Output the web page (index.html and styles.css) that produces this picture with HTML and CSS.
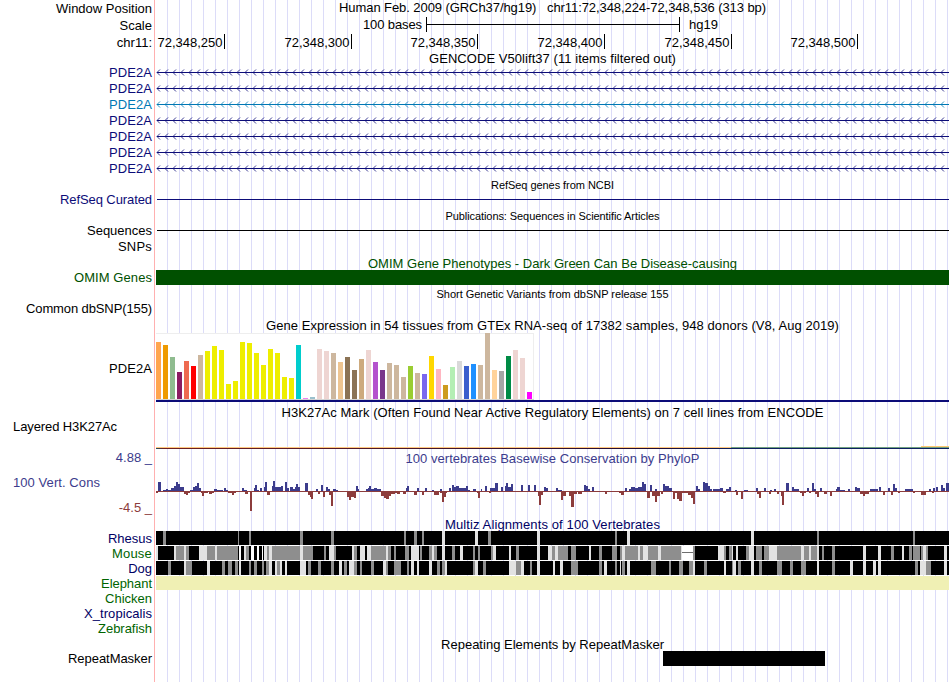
FILE: index.html
```
<!DOCTYPE html>
<html lang="en">
<head>
    <meta charset="UTF-8">
    <title>Genome Browser - chr11:72,348,224-72,348,536</title>
    <link rel="stylesheet" href="styles.css">
</head>
<body>
    <div class="browser">
        <!-- Position and ruler -->
        <div class="row">
            <div class="label"><span data-w="96">Window Position</span></div>
            <div class="caption top"><span data-w="427">Human Feb. 2009 (GRCh37/hg19)   chr11:72,348,224-72,348,536 (313 bp)</span></div>
        </div>
        <div class="row ruler-row">
            <div class="label">Scale</div>
            <div class="scale"><span data-w="59">100 bases</span><div class="scale-bar"></div><span>hg19</span></div>
        </div>
        <div class="row ruler-row">
            <div class="label">chr11:</div>
            <div class="ruler">
                <span>72,348,250</span><span>72,348,300</span><span>72,348,350</span><span>72,348,400</span><span>72,348,450</span><span>72,348,500</span>
            </div>
        </div>

        <!-- Genes -->
        <div class="row gencode-title"><div></div><div class="caption"><span data-w="247">GENCODE V50lift37 (11 items filtered out)</span></div></div>
        <div class="row gene"><div class="label"><span data-w="43">PDE2A</span></div><svg class="arrows"></svg></div>
        <div class="row gene"><div class="label"><span data-w="43">PDE2A</span></div><svg class="arrows"></svg></div>
        <div class="row gene light"><div class="label"><span data-w="43">PDE2A</span></div><svg class="arrows"></svg></div>
        <div class="row gene"><div class="label"><span data-w="43">PDE2A</span></div><svg class="arrows"></svg></div>
        <div class="row gene"><div class="label"><span data-w="43">PDE2A</span></div><svg class="arrows"></svg></div>
        <div class="row gene"><div class="label"><span data-w="43">PDE2A</span></div><svg class="arrows"></svg></div>
        <div class="row gene"><div class="label"><span data-w="43">PDE2A</span></div><svg class="arrows"></svg></div>

        <div class="row small"><div></div><div class="caption"><span data-w="123">RefSeq genes from NCBI</span></div></div>
        <div class="row navy"><div class="label"><span data-w="92">RefSeq Curated</span></div><div class="line"></div></div>
        <div class="row small"><div></div><div class="caption"><span data-w="214">Publications: Sequences in Scientific Articles</span></div></div>
        <div class="row"><div class="label"><span data-w="65">Sequences</span></div><div class="line"></div></div>
        <div class="row"><div class="label"><span data-w="34">SNPs</span></div></div>

        <div class="row omim-title"><div></div><div class="caption"><span data-w="369">OMIM Gene Phenotypes - Dark Green Can Be Disease-causing</span></div></div>
        <div class="row omim"><div class="label"><span data-w="78">OMIM Genes</span></div><div class="block"></div></div>
        <div class="row small"><div></div><div class="caption"><span data-w="232">Short Genetic Variants from dbSNP release 155</span></div></div>
        <div class="row"><div class="label"><span data-w="126">Common dbSNP(155)</span></div></div>

        <!-- GTEx -->
        <div class="row gtex-title"><div></div><div class="caption"><span data-w="573">Gene Expression in 54 tissues from GTEx RNA-seq of 17382 samples, 948 donors (V8, Aug 2019)</span></div></div>
        <div class="row gtex">
            <div class="label"><span data-w="43">PDE2A</span></div>
            <div class="gtex-lane"><div class="gtex-chart" id="gtex"></div></div>
        </div>

        <!-- Regulation -->
        <div class="row h3k-title"><div></div><div class="caption"><span data-w="542">H3K27Ac Mark (Often Found Near Active Regulatory Elements) on 7 cell lines from ENCODE</span></div></div>
        <div class="row h3k">
            <div class="label left"><span data-w="104">Layered H3K27Ac</span></div>
            <div class="h3k-signal"><i></i></div>
        </div>

        <!-- Conservation -->
        <div class="row cons">
            <div class="cons-labels">
                <div class="label">4.88 _</div>
                <div class="label left"><span data-w="87">100 Vert. Cons</span></div>
                <div class="label low">-4.5 _</div>
            </div>
            <div>
                <div class="caption"><span data-w="294">100 vertebrates Basewise Conservation by PhyloP</span></div>
                <svg id="phylop" width="793" height="48"></svg>
            </div>
        </div>

        <div class="row multiz-title"><div></div><div class="caption"><span data-w="215">Multiz Alignments of 100 Vertebrates</span></div></div>
        <div class="row species"><div class="label"><span data-w="44">Rhesus</span></div><svg class="align" id="rhesus"></svg></div>
        <div class="row species green"><div class="label"><span data-w="40">Mouse</span></div><svg class="align" id="mouse"></svg></div>
        <div class="row species"><div class="label">Dog</div><svg class="align" id="dog"></svg></div>
        <div class="row species green"><div class="label"><span data-w="51">Elephant</span></div><div class="missing"></div></div>
        <div class="row species green"><div class="label"><span data-w="47">Chicken</span></div></div>
        <div class="row species"><div class="label"><span data-w="68">X_tropicalis</span></div></div>
        <div class="row species green"><div class="label"><span data-w="54">Zebrafish</span></div></div>

        <div class="row repeat-title"><div></div><div class="caption"><span data-w="223">Repeating Elements by RepeatMasker</span></div></div>
        <div class="row repeat"><div class="label"><span data-w="84">RepeatMasker</span></div><div class="block"></div></div>
    </div>
    <script src="tracks.js"></script>
</body>
</html>
```
FILE: styles.css
```
body {
    margin: 0;
    background: #fff;
    font-family: "Liberation Sans", Arial, sans-serif;
    font-size: 13px;
    color: #000;
}

.browser {
    width: 949px;
    height: 682px;
    overflow: hidden;
    background:
        linear-gradient(#ffb0b0, #ffb0b0) 154px 0 / 1px 100% no-repeat,
        repeating-linear-gradient(90deg, #dcdcf8 0, #dcdcf8 1px, transparent 1px, transparent 12px) 167px 0 / 782px 100% no-repeat;
}

.row {
    display: grid;
    grid-template-columns: 156px 793px;
    height: 16px;
    line-height: 18px;
}

.row svg {
    display: block;
}

.label {
    padding-right: 4px;
    text-align: right;
}

.label.left {
    padding-left: 13px;
    text-align: left;
}

.label span,
.caption span,
.scale span {
    display: inline-block;
    white-space: pre;
}

.caption {
    text-align: center;
}

.caption.top {
    line-height: 16px;
}

.navy {
    color: #0c0c78;
}

/* ruler */
.ruler-row {
    height: 17px;
    line-height: 20px;
}

.scale {
    display: flex;
    padding-left: 207px;
    line-height: 17px;
}

.scale-bar {
    width: 252px;
    height: 15px;
    margin: 1px 9px 0 4px;
    border-left: 1px solid #000;
    border-right: 1px solid #000;
    background: linear-gradient(#000, #000) 0 7px / 100% 1px no-repeat;
}

.ruler {
    display: grid;
    grid-template-columns: 69px 127px 126px 127px 127px 126px;
    line-height: 17px;
    text-align: right;
}

.ruler span {
    height: 15px;
    margin-top: 1px;
    padding-right: 1.5px;
    border-right: 1px solid #000;
}

/* genes */
.gencode-title {
    height: 14px;
}

.gene {
    color: #0c0c78;
}

.gene.light {
    color: #0078b4;
}

.arrows {
    width: 793px;
    height: 16px;
    stroke: currentColor;
    fill: none;
}

.arrows .heads {
    stroke-width: 0.8;
}

.line {
    height: 1px;
    margin: 8px 0 0 1px;
    background: currentColor;
}

.small {
    height: 15px;
    line-height: 18px;
    font-size: 11px;
}

.omim-title {
    line-height: 19px;
    color: #005000;
}

.omim {
    height: 15px;
    line-height: 15px;
    color: #005000;
}

.block {
    height: 15px;
    background: currentColor;
}

/* expression chart */
.gtex-title {
    height: 17px;
    line-height: 20px;
}

.gtex {
    height: 69px;
    line-height: 72px;
}

.gtex-lane {
    height: 67px;
    border-bottom: 2px solid #0c0c78;
}

.gtex-chart {
    box-sizing: border-box;
    display: flex;
    align-items: flex-end;
    gap: 2px;
    width: 378px;
    height: 67px;
    background: linear-gradient(#eee, #eee) 0 0 / 100% 1px no-repeat, linear-gradient(#eee, #eee) 100% 0 / 1px 100% no-repeat, #fff;
    border-bottom: 1px solid #d3d3d3;
}

.gtex-chart div {
    width: 5px;
}

/* histone marks */
.h3k-title {
    line-height: 22px;
}

.h3k {
    height: 31px;
}

.h3k-signal {
    display: flex;
    flex-direction: column;
    justify-content: flex-end;
    align-items: flex-end;
}

.h3k-signal i {
    width: 28px;
    height: 1px;
    background: #ffc870;
}

.h3k-signal::after {
    content: "";
    width: 793px;
    height: 2px;
    background:
        linear-gradient(90deg, #ffc880 575px, #70a080 575px) 0 0 / 100% 1px no-repeat,
        linear-gradient(90deg, #205060 0, #702020 8px, #501828 220px, #200c38 500px, #0c2060 575px) 0 1px / 100% 1px no-repeat;
}

/* conservation */
.cons {
    height: 66px;
    color: #3c3c8c;
}

.cons .caption {
    height: 18px;
    line-height: 20px;
}

.cons-labels {
    display: flex;
    flex-direction: column;
    justify-content: space-between;
    height: 68px;
}

.low {
    color: #8c3c3c;
}

.multiz-title {
    line-height: 19px;
    color: #000064;
}

.species {
    height: 15px;
    line-height: 15px;
    color: #000064;
}

.species.green {
    color: #006400;
}

.align {
    width: 793px;
    height: 14px;
    background: #000;
}

.missing {
    height: 14px;
    background: #f0f0b4;
}

.repeat-title {
    height: 15px;
    line-height: 18px;
}

.repeat {
    line-height: 15px;
}

.repeat .block {
    width: 162px;
    margin-left: 507px;
}
```
FILE: tracks.js
```
const NS = 'http://www.w3.org/2000/svg';

function rect(svg, x, y, w, h, fill) {
    const r = document.createElementNS(NS, 'rect');
    r.setAttribute('x', x);
    r.setAttribute('y', y);
    r.setAttribute('width', w);
    r.setAttribute('height', h);
    r.setAttribute('fill', fill);
    svg.appendChild(r);
}

// Adjust tracking so each text takes its width in the layout
document.querySelectorAll('[data-w]').forEach((el) => {
    const w = el.getBoundingClientRect().width;
    el.style.letterSpacing = (el.dataset.w - w) / el.textContent.length + 'px';
});

// Minus strand arrows
document.querySelectorAll('.arrows').forEach((svg) => {
    let d = '';
    for (let x = 1; x < 793; x += 8) {
        d += `M${x + 3} 5.5L${x} 8.5L${x + 3} 11.5`;
    }
    const line = document.createElementNS(NS, 'path');
    line.setAttribute('d', 'M1 8.5H793');
    svg.appendChild(line);
    const heads = document.createElementNS(NS, 'path');
    heads.setAttribute('d', d);
    heads.setAttribute('class', 'heads');
    svg.appendChild(heads);
});

// GTEx: height and tissue color
const heights = [57, 54, 42, 27, 38, 33, 44, 48, 53, 49, 15, 18, 57, 56, 46, 34, 50, 46, 22, 21, 54, 1, 2, 50, 48, 46, 37, 42,
    29, 40, 49, 37, 29, 36, 34, 22, 33, 26, 25, 43, 30, 14, 32, 38, 33, 35, 34, 66, 29, 28, 43, 49, 41, 7];
const colors = ('ffa54f ee9a00 8fbc8f 8b1c62 ee6a50 ff0000 cdb79e ' + 'eeee00 '.repeat(13) +
    '00cdcd ee82ee 9ac0cd eed5d2 eed5d2 cdb79e eec591 8b7355 8b7355 cdaa7d eed5d2 b452cd 7a378b cdb79e cdb79e cdb79e ' +
    '9acd32 cdb79e 7a67ee ffd700 ffb6c1 cd9b1d b4eeb4 d9d9d9 3a5fcd 1e90ff cdb79e cdb79e ffd39b a6a6a6 008b45 eed5d2 eed5d2 ff00ff').split(' ');
const gtex = document.getElementById('gtex');
heights.forEach((h, i) => {
    const bar = document.createElement('div');
    bar.style.height = h + 'px';
    bar.style.background = '#' + colors[i];
    gtex.appendChild(bar);
});

// PhyloP: x, width, height
const up = [[2,3,9],[7,10,1],[10,2,2],[15,4,3],[18,3,5],[20,2,9],[22,2,7],[24,4,4],[34,4,1],[37,2,4],[39,3,5],[41,2,8],[43,2,3],
    [58,3,2],[61,6,1],[68,2,3],[70,2,1],[86,2,3],[88,3,1],[98,1,3],[99,2,6],[101,2,1],[104,2,3],[108,2,4],[109,2,9],[116,1,5],[117,2,10],[119,6,4],
    [125,2,5],[129,2,9],[131,2,3],[134,3,4],[137,2,2],[139,1,4],[140,2,7],[142,2,4],[149,3,8],[160,2,2],[165,2,6],[170,2,4],[172,2,2],
    [177,3,2],[180,2,1],[200,2,5],[202,1,2],[210,3,2],[212,1,3],[213,2,5],[215,3,2],[218,3,3],[221,4,2],[250,1,3],[251,2,5],[261,2,3],
    [269,2,3],[276,2,1],[284,2,2],[293,2,3],[296,2,6],[298,2,4],[300,3,5],[303,7,3],[310,2,5],[312,2,1],[317,3,2],[325,1,2],
    [329,2,5],[334,5,3],[339,3,8],[345,2,4],[349,1,5],[350,2,8],[352,3,4],[355,2,7],[365,2,6],[372,2,6],[378,2,6],[388,2,4],
    [390,2,3],[400,2,3],[402,4,1],[428,2,6],[430,2,5],[432,2,2],[436,2,4],[469,2,3],[473,2,2],[475,4,4],[479,3,3],[482,4,4],[486,2,9],
    [488,2,7],[494,2,6],[499,2,2],[507,2,7],[509,4,5],[513,3,3],[540,2,5],[542,2,2],[547,2,9],[549,3,8],[552,2,5],[554,2,2],
    [557,7,2],[564,3,3],[570,3,2],[573,2,4],[579,2,1],[588,4,1],[600,2,3],[608,2,3],[614,2,1],[618,2,2],[630,3,8],[636,2,4],[638,5,2],
    [651,2,3],[656,2,8],[658,2,2],[664,2,3],[680,1,2],[681,3,4],[684,5,1],[692,2,2],[699,2,4],[701,3,3],[714,8,2],[723,2,4],[732,2,3],
    [737,2,7],[739,2,3],[749,8,2],[773,2,2],[777,2,3],[780,2,4],[785,2,6],[787,2,3],[790,3,8]];
const down = [[0,2,2],[28,2,3],[30,2,4],[32,2,2],[45,1,2],[46,2,5],[48,4,2],[53,3,3],[56,2,2],[72,3,2],[75,1,2],[76,2,4],[78,2,2],
    [89,3,3],[94,2,20],[111,3,4],[152,2,4],[154,1,6],[155,2,8],[162,2,3],[167,2,6],[173,2,4],[175,2,15],[191,2,6],[193,2,9],
    [194,4,6],[198,2,7],[225,3,5],[228,2,7],[230,3,8],[233,2,5],[235,4,3],[239,3,2],[241,3,3],[247,3,3],[258,3,4],[266,2,4],
    [278,5,4],[284,2,2],[286,2,11],[288,2,6],[290,1,2],[321,1,2],[322,2,7],[333,2,2],[382,1,5],[383,2,14],[385,2,4],[405,2,9],
    [407,3,5],[413,2,5],[415,3,16],[418,3,3],[422,4,3],[449,2,3],[463,2,2],[465,3,4],[491,3,7],[496,3,5],[499,2,11],[501,3,5],
    [505,2,3],[517,2,8],[519,2,2],[521,2,8],[523,3,10],[526,6,2],[532,3,4],[535,2,7],[537,2,13],[567,3,2],[580,2,4],[585,2,8],
    [601,2,3],[603,2,7],[613,2,3],[621,2,3],[625,1,5],[626,2,14],[644,2,2],[646,2,5],[648,2,2],[653,2,2],[659,2,3],[661,2,6],
    [668,3,3],[674,2,5],[704,3,3],[707,2,5],[709,4,3],[727,2,4],[735,2,4],[742,2,2],[757,2,2],[765,5,4],[776,2,2]];
const phylop = document.getElementById('phylop');
rect(phylop, 0, 24, 793, 1, '#8c3c3c');
up.forEach(([x, w, h]) => rect(phylop, x, 24 - h, w, h, '#3c3c8c'));
down.forEach(([x, w, h]) => rect(phylop, x, 24, w, h, '#8c3c3c'));

// Alignments: lower identity blocks, g = mid, l = low, w = none
const shades = { g: '#8e8e8e', l: '#e2e2e2', w: '#ffffff' };
const blocks = {
    rhesus: 'g7,3 g82,1 g93,2 g144,3 g175,3 g248,2 g258,3 g266,2 l286,3 l319,3 g332,3 l381,3 g459,2 l471,3 l595,3 g661,2 g757,2',
    mouse: 'l0,2 l18,2 g20,8 l28,2 g30,3 l43,8 g51,8 l59,2 g61,21 w83,2 l88,2 g90,3 w95,3 w101,2 w106,1 l108,3 g111,2 l113,3 ' +
        'g116,28 l144,3 g147,10 g168,2 l173,5 g178,2 l196,2 g198,3 l204,5 l211,4 g215,15 l230,2 g232,3 g238,2 g249,4 l255,8 ' +
        'g264,2 g273,3 l276,2 g278,3 l286,3 g296,3 l304,3 g317,2 g322,2 g335,2 l337,3 l353,2 g360,3 l381,3 l392,4 g396,3 l399,3 ' +
        'g402,10 g415,5 l433,2 g443,3 g456,5 g464,2 l466,3 g469,13 l482,2 g484,3 l487,5 g492,10 l502,3 g505,20 l525,1 w526,11 g537,2 ' +
        'l562,6 g568,2 g573,3 l576,1 l580,2 g590,3 l593,5 g600,6 g608,5 l613,8 g621,24 l645,3 g648,5 l653,2 g655,6 l661,2 g666,2 ' +
        'g676,3 l707,3 l722,3 g735,3 l746,2 g753,3 g757,7 g765,2 l767,3 g770,2 l788,3',
    dog: 'g12,3 l28,2 g30,6 l51,3 g66,3 g72,4 g79,3 l83,2 g93,2 g98,3 g106,2 g110,3 l113,3 l119,2 g121,3 l124,2 l129,2 l144,6 ' +
        'g152,3 g162,3 g175,3 l183,3 g188,3 l193,5 g198,3 g204,2 g215,3 l227,3 g230,2 g238,7 g251,2 l255,3 l261,2 l273,3 g281,3 ' +
        'g286,3 l289,2 g317,2 l319,3 g327,3 l353,2 l355,5 g360,5 l365,3 g374,2 l381,3 l397,2 l404,3 g415,7 g443,3 l448,3 g459,2 ' +
        'l464,1 g466,3 l471,3 g495,5 g513,2 g523,4 g533,4 l537,2 g548,3 l568,2 g576,1 l577,3 g582,3 l595,3 g603,3 g621,5 g634,3 ' +
        'g645,5 l661,2 g676,3 l694,3 l707,3 l717,3 l722,3 g759,3 l764,6 g770,5 l788,3'
};
for (const id in blocks) {
    const svg = document.getElementById(id);
    blocks[id].split(' ').forEach((b) => {
        const [x, w] = b.slice(1).split(',');
        rect(svg, x, 0, w, 14, shades[b[0]]);
    });
}
// unaligned gap in mouse
rect(document.getElementById('mouse'), 526, 6, 11, 1, '#6e6e6e');
```
